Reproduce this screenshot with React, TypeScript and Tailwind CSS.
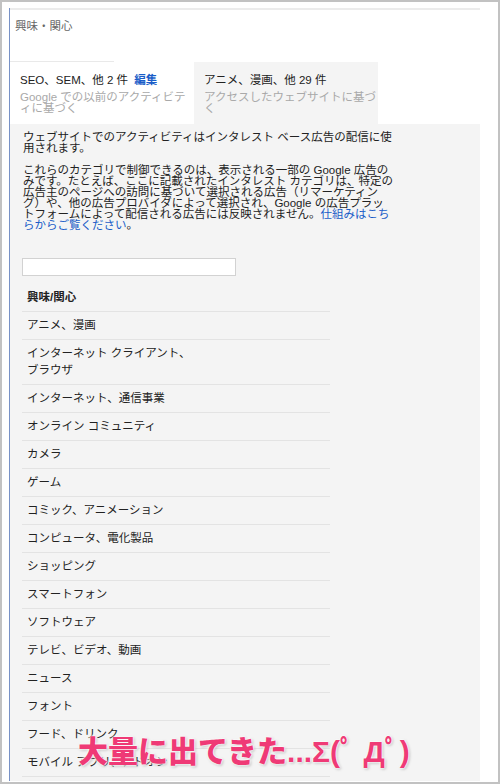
import React from 'react';

const rows: string[][] = [
  ['アニメ、漫画'],
  ['インターネット クライアント、', 'ブラウザ'],
  ['インターネット、通信事業'],
  ['オンライン コミュニティ'],
  ['カメラ'],
  ['ゲーム'],
  ['コミック、アニメーション'],
  ['コンピュータ、電化製品'],
  ['ショッピング'],
  ['スマートフォン'],
  ['ソフトウェア'],
  ['テレビ、ビデオ、動画'],
  ['ニュース'],
  ['フォント'],
  ['フード、ドリンク'],
  ['モバイル アプリ、アドオン'],
];

export default function App() {
  return (
    <div className="relative w-[500px] h-[784px] overflow-hidden bg-white border-2 border-[#c2c2c2] font-['Liberation_Sans','Noto_Sans_CJK_JP',sans-serif] text-[#222]">
      <div className="mt-[6px] ml-[7px] w-[471px] h-[773px] flex flex-col border-l border-[#7891c6]">
        <div className="shrink-0 h-[2px] bg-[#ececec]" />

        <div className="shrink-0 h-[51px] pl-[5px] pt-[9px] text-[11.5px] leading-[14px] text-[#666]">興味・関心</div>

        <div className="shrink-0 flex h-[63px]">
          <div className="w-[184px] bg-white">
            <div className="w-[104px] h-px bg-[#e9e9e9]" />
            <div className="pl-[10px] pt-[11px]">
              <div className="text-[11.5px] leading-[14px]">
                SEO、SEM、他 2 件 <span className="ml-[3px] font-bold text-[#1a5dc8]">編集</span>
              </div>
              <div className="mt-[5px] text-[11.5px] leading-[11px] text-[#a9a9a9]">
                <div>Google での以前のアクティビテ</div>
                <div>ィに基づく</div>
              </div>
            </div>
          </div>
          <div className="w-[184px] mt-px bg-[#f4f4f4] pl-[10px] pt-[11px]">
            <div className="text-[11.5px] leading-[14px]">アニメ、漫画、他 29 件</div>
            <div className="mt-[5px] text-[11.5px] leading-[11px] text-[#a9a9a9]">
              <div>アクセスしたウェブサイトに基づ</div>
              <div>く</div>
            </div>
          </div>
        </div>

        <div className="flex-1 min-h-0 overflow-hidden bg-[#f4f4f4] pl-[12px] pt-[8px]">
          <div className="pl-px text-[11.5px] leading-[11px] whitespace-nowrap">
            <div>ウェブサイトでのアクティビティはインタレスト ベース広告の配信に使</div>
            <div>用されます。</div>
          </div>
          <div className="mt-[11px] pl-px text-[11.5px] leading-[11px] whitespace-nowrap">
            <div>これらのカテゴリで制御できるのは、表示される一部の Google 広告の</div>
            <div>みです。たとえば、ここに記載されたインタレスト カテゴリは、特定の</div>
            <div>広告主のページへの訪問に基づいて選択される広告（リマーケティン</div>
            <div>グ）や、他の広告プロバイダによって選択され、Google の広告プラッ</div>
            <div>
              トフォームによって配信される広告には反映されません。<span className="text-[#1a5dc8]">仕組みはこち</span>
            </div>
            <div>
              <span className="text-[#1a5dc8]">らからご覧ください</span>。
            </div>
          </div>

          <div className="mt-[27px] w-[214px] h-[18px] bg-white border border-[#d2d2d2]" />

          <div className="mt-[8px] w-[308px] text-[11.5px]">
            <div className="px-[5px] py-[5px] leading-[17px] font-bold border-b border-[#e3e3e3]">興味/関心</div>
            {rows.map((lines, i) => (
              <div key={i} className="px-[5px] py-[5px] leading-[17px] border-b border-[#e3e3e3]">
                {lines.map((l, j) => (
                  <div key={j}>{l}</div>
                ))}
              </div>
            ))}
          </div>
        </div>
      </div>

      <div className="absolute left-[76px] top-[731px] whitespace-nowrap text-[30px] leading-[38px] font-black text-[#ef3a76] [text-shadow:0_0_2px_#fff,0_0_2px_#fff,0_0_3px_#fff,1px_1px_3px_rgba(0,0,0,0.35)]">
        大量に出てきた...Σ(ﾟ Дﾟ)
      </div>
    </div>
  );
}
